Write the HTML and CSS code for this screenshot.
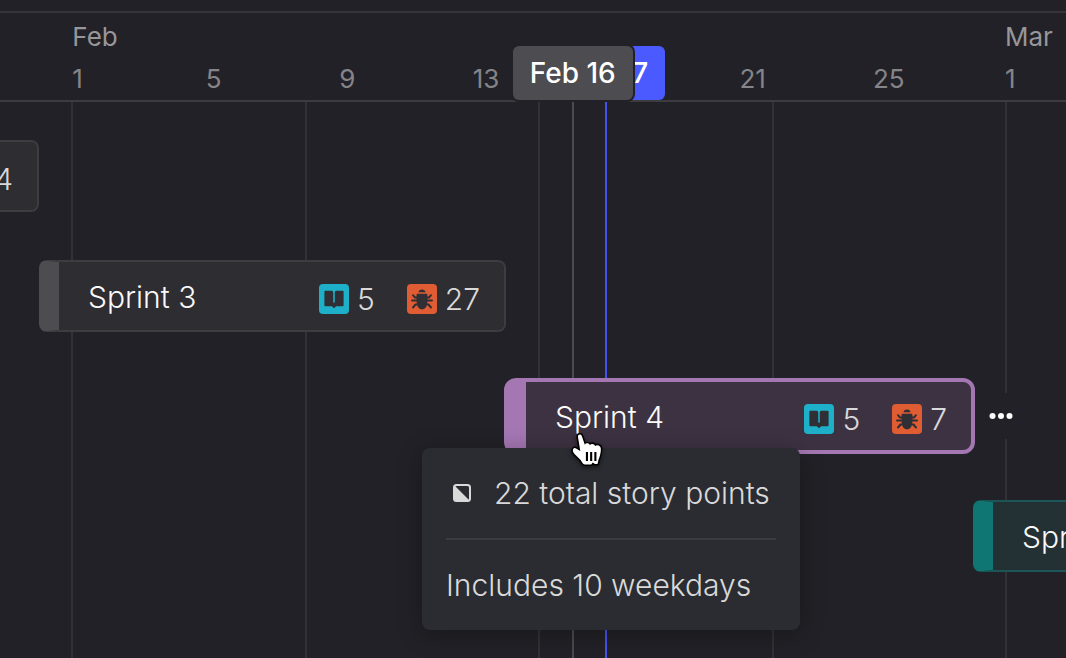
FILE: index.html
```html
<!DOCTYPE html>
<html lang="en">
<head>
    <meta charset="UTF-8">
    <meta name="viewport" content="width=device-width, initial-scale=1.0">
    <title>Roadmap</title>
    <link rel="stylesheet" href="styles.css">
</head>
<body>
    <svg class="sprite" aria-hidden="true">
        <symbol id="icon-book" viewBox="0 0 30 30">
            <path d="M6.200 6.800h6.300q1.700 0 1.700 1.500V18q0 .8.800.8t.8-.8V8.300q0-1.500 1.700-1.500h6.300q.8 0 .8.800v13.800q0 .8-.8.800h-6.600L15 24.300l-2.200-2.100H6.200q-.8 0-.8-.8V7.600q0-.8.800-.8z"/>
        </symbol>
        <symbol id="icon-bug" viewBox="0 0 30 30">
            <path d="M11.500 8.300q.4-2.800 3.500-2.800t3.500 2.800z"/>
            <path d="M9.800 9.700h10.400q.5 2 .3 6.300 0 9.400-5.500 9.400T9.500 16q-.2-4.300.3-6.300z"/>
            <path class="legs" d="M10 13.500H8L6 11.200M9.600 16.600H5M10 20.500H8.500L6 23.500M20 13.500h2l2-2.300M20.400 16.600H25M20 20.500h1.500l2.500 3"/>
        </symbol>
    </svg>

    <header class="axis">
        <span class="month feb">Feb</span>
        <span class="month mar">Mar</span>
        <span class="day d1">1</span>
        <span class="day d5">5</span>
        <span class="day d9">9</span>
        <span class="day d13">13</span>
        <span class="day d21">21</span>
        <span class="day d25">25</span>
        <span class="day d29">1</span>
        <span class="flag today">Feb 17</span>
        <span class="flag hovered">Feb 16</span>
    </header>

    <main class="board">
        <i class="line d1"></i>
        <i class="line d8"></i>
        <i class="line d15"></i>
        <i class="line line-hovered d16"></i>
        <i class="line line-today d17"></i>
        <i class="line d22"></i>
        <i class="line d29"></i>

        <div class="bar sprint-2">
            <span class="count">4</span>
        </div>

        <div class="bar sprint-3">
            <span class="name">Sprint 3</span>
            <span class="count"><svg class="icon book"><use href="#icon-book"/></svg>5</span>
            <span class="count"><svg class="icon bug"><use href="#icon-bug"/></svg>27</span>
        </div>

        <div class="bar sprint-4">
            <span class="name">Sprint 4</span>
            <span class="count"><svg class="icon book"><use href="#icon-book"/></svg>5</span>
            <span class="count"><svg class="icon bug"><use href="#icon-bug"/></svg>7</span>

            <div class="tooltip" role="tooltip">
                <p class="points">
                    <svg class="points-icon" viewBox="0 0 18 18">
                        <rect x="1" y="1" width="16" height="16" rx="2.500"/>
                        <path d="M1 1l16 16H3q-2 0-2-2z"/>
                    </svg>
                    22 total story points
                </p>
                <p class="weekdays">Includes 10 weekdays</p>
            </div>

            <svg class="cursor" viewBox="0 0 34 36">
                <path class="hand" d="M7.500 4.800C7 1.800 10.500 1.500 11.300 4.200L14 12c1-2 4-1.800 4.800.5 1.200-1.900 4.200-1.600 5 .8 1.500-1.600 5.300-1 5.400 2.700 0 4.500-1.200 7.500-2.200 10l-1 4.300h-2.500l-2-1.500-1.500 2h-6c-1.500 0-2.500-1.800-4-4.300L4 20.500c-2.500-3-1.200-5.500 1-5.200 1.700.3 3 1.800 4.700 2.700z"/>
                <path class="creases" d="M16 19v8.500M20 19v8.500M24 19v8.500"/>
            </svg>
        </div>
        <button class="more" type="button" aria-label="More actions">
            <svg viewBox="0 0 24 8"><circle cx="3.500" cy="4" r="3"/><circle cx="12" cy="4" r="3"/><circle cx="20.500" cy="4" r="3"/></svg>
        </button>

        <div class="bar sprint-5">
            <span class="name">Sprint 5</span>
        </div>
    </main>
</body>
</html>
```
FILE: styles.css
```css
body {
    margin: 0;
    min-height: 100vh;
    display: flex;
    flex-direction: column;
    background: #222127;
    color: #d9d9da;
    font-family: Inter, "Liberation Sans", sans-serif;
    font-size: 30px;
    font-weight: 350;
    overflow: hidden;
}
.sprite {
    display: none;
}

/* one column per day, Jan 31 to Feb 27, with the rest of the page on both sides */
.axis, .board {
    display: grid;
    grid-template-columns: 39px repeat(28, minmax(0, 1fr)) 93px;
}
.d1 { grid-column: 3; }
.d5 { grid-column: 7; }
.d8 { grid-column: 10; }
.d9 { grid-column: 11; }
.d13 { grid-column: 15; }
.d15 { grid-column: 17; }
.d16 { grid-column: 18; }
.d17 { grid-column: 19; }
.d21 { grid-column: 23; }
.d22 { grid-column: 24; }
.d25 { grid-column: 27; }
.d29 { grid-column: 30; }

.axis {
    margin-top: 11px;
    grid-template-rows: 44px 43px;
    border-top: 2px solid #35343a;
    border-bottom: 2px solid #3c3b40;
    color: #858487;
    font-size: 26px;
    font-weight: 400;
    line-height: 44px;
    white-space: nowrap;
}
.month {
    grid-row: 1;
    padding-top: 2px;
    color: #979699;
}
.feb { grid-column: 3; }
.mar { grid-column: 30; padding-left: 32px; }
.day {
    grid-row: 2;
}
.day.d29 {
    padding-left: 32px;
}
.flag {
    grid-row: 1 / 3;
    align-self: end;
    justify-self: center;
    padding: 0 17px;
    border-radius: 6px;
    color: #fff;
    font-size: 28px;
    font-weight: 500;
    line-height: 54px;
}
.today {
    grid-column: 17 / 21;
    background: #4a5aff;
}
.hovered {
    grid-column: 16 / 20;
    background: #4d4c51;
    box-shadow: 0 0 0 2px #222127;
}

.board {
    flex: 1;
    grid-template-rows: repeat(4, 120px) 1fr;
    padding-top: 14px;
}
.line {
    grid-row: 1 / -1;
    margin-top: -14px;
    margin-left: -1px;
    border-left: 2px solid #323136;
}
.line.d29 {
    margin-left: 32px;
}
.line-hovered {
    border-color: #4a494d;
}
.line-today {
    border-color: #4553ee;
}

.bar {
    box-sizing: border-box;
    height: 72px;
    min-width: 0;
    align-self: center;
    display: flex;
    align-items: center;
    gap: 32px;
    padding: 0 24px 0 29px;
    border: 2px solid #3d3c41;
    border-left: 20px solid #4d4c51;
    border-radius: 8px;
    background: #2e2d31;
    background-clip: padding-box;
    white-space: nowrap;
    z-index: 1;
}
.name {
    flex: 1;
    padding-top: 2px;
    color: #fafafa;
}
.count {
    display: flex;
    align-items: center;
    gap: 8px;
    padding-top: 6px;
}
.icon {
    width: 30px;
    height: 30px;
    border-radius: 4px;
    fill: #302f35;
}
.book {
    background: #1eb0c9;
}
.bug {
    background: #e05d33;
}
.legs {
    fill: none;
    stroke: #302f35;
    stroke-width: 2;
    stroke-linecap: round;
    stroke-linejoin: round;
}
.sprint-2 {
    grid-area: 1 / 1;
    justify-content: flex-end;
    padding-left: 0;
    border-left: 0;
    border-radius: 0 8px 8px 0;
}
.sprint-3 {
    grid-area: 2 / 2 / 3 / 16;
}
.sprint-4 {
    grid-area: 3 / 16 / 4 / 30;
    position: relative;
    height: 76px;
    margin: 0 -2px;
    border: 4px solid #a477b3;
    border-left-width: 22px;
    border-radius: 12px;
    background: #3d3242;
    z-index: 2;
}
.sprint-5 {
    grid-area: 4 / 30;
    padding-right: 0;
    border-color: #1b5556;
    border-left-color: #0f7673;
    border-right: 0;
    border-radius: 8px 0 0 8px;
    background: #233135;
    overflow: hidden;
}

.more {
    grid-area: 3 / 30;
    align-self: center;
    width: 46px;
    height: 46px;
    margin-left: 5px;
    padding: 0;
    border: 0;
    background: #222127;
    z-index: 1;
}
.more svg {
    display: block;
    width: 24px;
    height: 8px;
    margin: auto;
    fill: #fff;
}

.tooltip {
    position: absolute;
    top: 66px;
    left: -104px;
    min-width: 330px;
    padding: 0 24px;
    border-radius: 8px;
    background: #2b2c31;
    box-shadow: 0 4px 24px rgba(0, 0, 0, 0.3);
}
.tooltip p {
    margin: 0;
    line-height: 90px;
}
.points {
    display: flex;
    align-items: center;
    gap: 23px;
    padding-left: 7px;
    border-bottom: 2px solid #3b3b40;
}
.points-icon {
    width: 18px;
    height: 18px;
    fill: #d9d9da;
}
.points-icon rect {
    fill: none;
    stroke: #d9d9da;
    stroke-width: 2;
}
.cursor {
    position: absolute;
    top: 50px;
    left: 44px;
    width: 36px;
    height: 38px;
    filter: drop-shadow(0 2px 2px rgba(0, 0, 0, 0.5));
}
.hand {
    fill: #fff;
    stroke: #000;
    stroke-width: 3;
    stroke-linejoin: round;
    paint-order: stroke;
}
.creases {
    stroke: #000;
    stroke-width: 2;
}
```
